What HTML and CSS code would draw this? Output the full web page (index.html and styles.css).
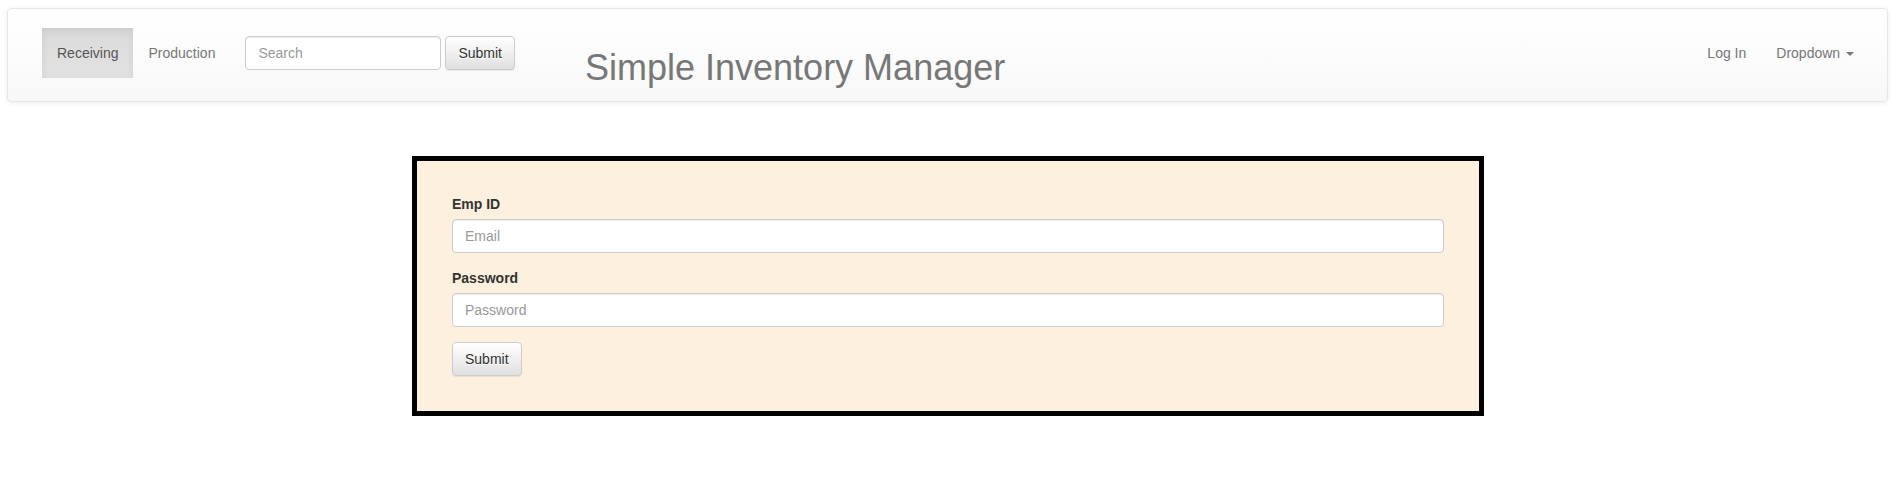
FILE: index.html
```html
<!DOCTYPE html>
<html lang="en">
<head>
<meta charset="utf-8">
<title>Simple Inventory Manager</title>
<link rel="stylesheet" href="styles.css">
</head>
<body>
<nav class="navbar">
  <ul class="nav">
    <li class="active"><a href="#">Receiving</a></li>
    <li><a href="#">Production</a></li>
  </ul>
  <form class="navbar-form">
    <input class="form-control search" type="text" placeholder="Search">
    <button class="btn" type="button">Submit</button>
  </form>
  <h1 class="brand-title">Simple Inventory Manager</h1>
  <ul class="nav nav-right">
    <li><a href="#">Log In</a></li>
    <li><a href="#">Dropdown <span class="caret"></span></a></li>
  </ul>
</nav>
<main class="main">
  <div class="login-box">
    <form class="login-form">
      <div class="form-group">
        <label class="field-label">Emp ID</label>
        <input class="form-control" type="email" placeholder="Email">
      </div>
      <div class="form-group">
        <label class="field-label">Password</label>
        <input class="form-control" type="password" placeholder="Password">
      </div>
      <button class="btn" type="button">Submit</button>
    </form>
  </div>
</main>
</body>
</html>
```
FILE: styles.css
```css
* { box-sizing: border-box; }
html, body { margin: 0; padding: 0; }
body {
  font-family: "Liberation Sans", Arial, Helvetica, sans-serif;
  font-size: 14px;
  line-height: 20px;
  color: #333;
  background: #fff;
}
.navbar {
  display: flex;
  align-items: flex-start;
  margin: 8px 15px 0 7px;
  height: 94px;
  padding: 19px 18px 0 34px;
  border: 1px solid #e7e7e7;
  border-radius: 4px;
  background: linear-gradient(to bottom, #ffffff 0%, #f8f8f8 100%);
  box-shadow: inset 0 1px 0 rgba(255,255,255,.15), 0 1px 5px rgba(0,0,0,.075);
}
.nav {
  display: flex;
  list-style: none;
  margin: 0;
  padding: 0;
}
.nav a {
  display: block;
  padding: 15px;
  line-height: 20px;
  color: #777;
  text-decoration: none;
}
.nav .active a {
  color: #555;
  background: linear-gradient(to bottom, #dbdbdb 0%, #e2e2e2 100%);
  box-shadow: inset 0 3px 9px rgba(0,0,0,.075);
}
.nav-right { margin-left: auto; }
.caret {
  display: inline-block;
  width: 0;
  height: 0;
  margin-left: 2px;
  vertical-align: middle;
  border-top: 4px solid #777;
  border-left: 4px solid transparent;
  border-right: 4px solid transparent;
}
.navbar-form {
  display: flex;
  gap: 4px;
  margin: 8px 0 0;
  padding: 0 15px;
}
.form-control {
  display: block;
  height: 34px;
  padding: 6px 12px;
  font-family: inherit;
  font-size: 14px;
  line-height: 20px;
  color: #555;
  background: #fff;
  border: 1px solid #ccc;
  border-radius: 4px;
  box-shadow: inset 0 1px 1px rgba(0,0,0,.075);
  width: 100%;
}
.form-control::placeholder { color: #999; }
.search { width: 196px; }
.btn {
  height: 34px;
  padding: 6px 12px;
  font-family: inherit;
  font-size: 14px;
  line-height: 20px;
  color: #333;
  background: linear-gradient(to bottom, #ffffff 0%, #e0e0e0 100%);
  border: 1px solid #ccc;
  border-radius: 4px;
  text-shadow: 0 1px 0 #fff;
  box-shadow: inset 0 1px 0 rgba(255,255,255,.15), 0 1px 1px rgba(0,0,0,.075);
}
.brand-title {
  margin: 20px 0 0 55px;
  font-size: 36px;
  font-weight: 500;
  line-height: 39.6px;
  color: #777;
}
.main {
  display: flex;
  justify-content: center;
  margin-top: 54px;
  padding-right: 7px;
}
.login-box {
  width: 1072px;
  border: 5px solid #000;
  background: #fef0de;
  padding: 33px 35px 35px;
}
.login-form { margin: 0; }
.form-group { margin-bottom: 15px; }
.field-label {
  display: block;
  margin-bottom: 5px;
  font-weight: bold;
  color: #333;
}
```
